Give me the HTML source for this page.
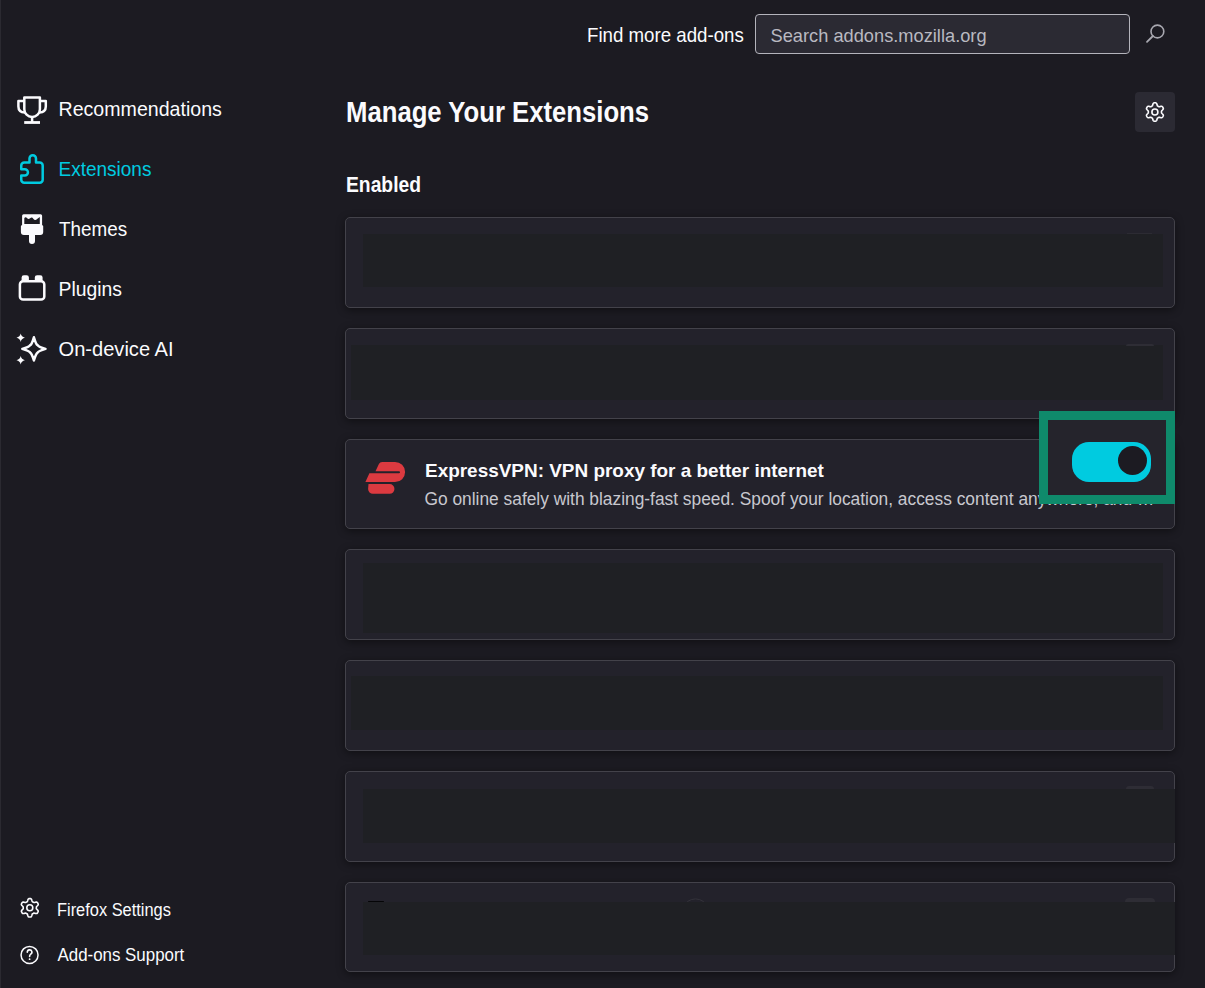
<!DOCTYPE html>
<html><head><meta charset="utf-8"><style>
html,body{margin:0;padding:0;}
body{width:1205px;height:988px;overflow:hidden;background:#1c1b22;position:relative;font-family:"Liberation Sans",sans-serif;}
.t{position:absolute;white-space:pre;line-height:1;}
.card{position:absolute;left:345px;width:830px;box-sizing:border-box;border:1px solid #43424a;border-radius:5px;background:#23222b;box-shadow:0 2px 8px rgba(0,0,0,0.45);}
</style></head><body>
<div style="position:absolute;left:0;top:0;width:1px;height:988px;background:#2b2a31"></div>
<svg width="60" height="988" style="position:absolute;left:0;top:0" viewBox="0 0 60 988">
 <g fill="none" stroke="#fbfbfe" stroke-width="2.5" stroke-linejoin="round" stroke-linecap="butt">
  <!-- trophy -->
  <path d="M24.3,97.5 H39.9 V109.2 A7.8,7.8 0 0 1 24.3,109.2 Z"/>
  <path d="M24.3,101.1 H18.4 V106.5 C18.4,110.2 20.8,112.3 24.9,112.6"/>
  <path d="M39.9,101.1 H45.8 V106.5 C45.8,110.2 43.4,112.3 39.3,112.6"/>
  <path d="M32.1,117 V122.5"/>
  <path d="M24.2,122.5 H40" stroke-width="2.8"/>
 </g>
 <path fill="none" stroke="#00cbe0" stroke-width="2.5" stroke-linejoin="round"
  d="M29.5,162.6 V158.4 A3.25,3.25 0 0 1 36,158.4 V162.6 H39.7 A3,3 0 0 1 42.7,165.6 V179.8 A3,3 0 0 1 39.7,182.8 H24.25 A3,3 0 0 1 21.25,179.8 V175.5 H24.8 A3.15,3.15 0 0 0 24.8,169.2 H21.25 V165.6 A3,3 0 0 1 24.25,162.6 Z"/>
 <!-- brush -->
 <path fill="#fbfbfe" fill-rule="evenodd" d="M23.6,214.2 H40.6 A1.5,1.5 0 0 1 42.1,215.7 V226 H22.1 V215.7 A1.5,1.5 0 0 1 23.6,214.2 Z
   M24.3,223.9 V218.2 Q25.2,216.5 26.4,217.6 Q28.2,219.9 30.1,218.3 Q31.9,216.7 33.3,218.7 Q35.1,221.2 37.1,219 L39.8,216.9 V223.9 Z"/>
 <path fill="#fbfbfe" d="M21.9,225.3 H42.2 A1,1 0 0 1 43.2,226.3 V232 A3,3 0 0 1 40.2,235 H35 V241 A3,3 0 0 1 29,241 V235 H23.9 A3,3 0 0 1 20.9,232 V226.3 A1,1 0 0 1 21.9,225.3 Z"/>
 <!-- plugin -->
 <rect x="19.9" y="281.3" width="24.4" height="18.3" rx="3.2" fill="none" stroke="#fbfbfe" stroke-width="2.5"/>
 <path fill="#fbfbfe" d="M21.6,281 V277.6 A2.3,2.3 0 0 1 23.9,275.3 H26.6 A2.3,2.3 0 0 1 28.9,277.6 V281 Z M34.8,281 V277.6 A2.3,2.3 0 0 1 37.1,275.3 H40.3 A2.3,2.3 0 0 1 42.6,277.6 V281 Z"/>
 <!-- sparkle -->
 <path fill="none" stroke="#fbfbfe" stroke-width="2.5" stroke-linejoin="round"
   d="M33.90,337.30 Q35.94,344.27 37.60,345.20 Q38.52,346.86 45.50,348.90 Q38.52,350.94 37.60,352.60 Q35.94,353.52 33.90,360.50 Q31.86,353.52 30.20,352.60 Q29.27,350.94 22.30,348.90 Q29.27,346.86 30.20,345.20 Q31.86,344.27 33.90,337.30 Z"/>
 <path fill="#fbfbfe" d="M20.7,333.6 Q21.4,337 24.9,337.7 Q21.4,338.4 20.7,341.9 Q20,338.4 16.5,337.7 Q20,337 20.7,333.6 Z"/>
 <path fill="#fbfbfe" d="M20.7,356.1 Q21.4,359.5 24.9,360.2 Q21.4,360.9 20.7,364.4 Q20,360.9 16.5,360.2 Q20,359.5 20.7,356.1 Z"/>
 <!-- footer gear -->
 <path fill="none" stroke="#fbfbfe" stroke-width="1.6" stroke-linejoin="round" d="M36.40,907.80 L36.39,908.15 L36.36,908.49 L36.49,908.86 L36.89,909.31 L37.43,909.84 L37.93,910.44 L38.23,911.03 L38.20,911.54 L38.00,911.98 L37.77,912.40 L37.52,912.81 L37.24,913.21 L36.81,913.48 L36.15,913.52 L35.39,913.39 L34.65,913.19 L34.06,913.06 L33.68,913.14 L33.39,913.34 L33.10,913.52 L32.80,913.68 L32.48,913.83 L32.23,914.12 L32.04,914.70 L31.84,915.43 L31.58,916.16 L31.21,916.71 L30.76,916.95 L30.28,916.99 L29.80,917.00 L29.32,916.99 L28.84,916.95 L28.39,916.71 L28.02,916.16 L27.76,915.43 L27.56,914.70 L27.37,914.12 L27.12,913.83 L26.80,913.68 L26.50,913.52 L26.21,913.34 L25.92,913.14 L25.54,913.06 L24.95,913.19 L24.21,913.39 L23.45,913.52 L22.79,913.48 L22.36,913.21 L22.08,912.81 L21.83,912.40 L21.60,911.98 L21.40,911.54 L21.37,911.03 L21.67,910.44 L22.17,909.84 L22.71,909.31 L23.11,908.86 L23.24,908.49 L23.21,908.15 L23.20,907.80 L23.21,907.45 L23.24,907.11 L23.11,906.74 L22.71,906.29 L22.17,905.76 L21.67,905.16 L21.37,904.57 L21.40,904.06 L21.60,903.62 L21.83,903.20 L22.08,902.79 L22.36,902.39 L22.79,902.12 L23.45,902.08 L24.21,902.21 L24.95,902.41 L25.54,902.54 L25.92,902.46 L26.21,902.26 L26.50,902.08 L26.80,901.92 L27.12,901.77 L27.37,901.48 L27.56,900.90 L27.76,900.17 L28.02,899.44 L28.39,898.89 L28.84,898.65 L29.32,898.61 L29.80,898.60 L30.28,898.61 L30.76,898.65 L31.21,898.89 L31.58,899.44 L31.84,900.17 L32.04,900.90 L32.23,901.48 L32.48,901.77 L32.80,901.92 L33.10,902.08 L33.39,902.26 L33.68,902.46 L34.06,902.54 L34.65,902.41 L35.39,902.21 L36.15,902.08 L36.81,902.12 L37.24,902.39 L37.52,902.79 L37.77,903.20 L38.00,903.62 L38.20,904.06 L38.23,904.57 L37.93,905.16 L37.43,905.76 L36.89,906.29 L36.49,906.74 L36.36,907.11 L36.39,907.45 Z"/>
 <circle cx="29.8" cy="907.8" r="3" fill="none" stroke="#fbfbfe" stroke-width="1.6"/>
 <!-- help -->
 <circle cx="29.55" cy="954.9" r="8.5" fill="none" stroke="#fbfbfe" stroke-width="1.5"/>
 <path fill="none" stroke="#fbfbfe" stroke-width="1.6" stroke-linecap="round" d="M27.3,952.2 A2.3,2.3 0 1 1 30.5,954.3 C29.8,954.8 29.6,955.3 29.6,956.4"/>
 <circle cx="29.6" cy="959.2" r="0.9" fill="#fbfbfe"/>
</svg>
<div class="t" style="left:58.5px;top:100.41px;font-size:19.6px;font-weight:400;color:#fbfbfe;transform:scaleY(1.03);transform-origin:0 16.59px;">Recommendations</div>
<div class="t" style="left:58.5px;top:159.92px;font-size:19.0px;font-weight:400;color:#00cbe0;transform:scaleY(1.04);transform-origin:0 16.08px;">Extensions</div>
<div class="t" style="left:59px;top:221.04px;font-size:18.85px;font-weight:400;color:#fbfbfe;transform:scaleY(1.06);transform-origin:0 15.96px;">Themes</div>
<div class="t" style="left:58.5px;top:279.62px;font-size:19.35px;font-weight:400;color:#fbfbfe;transform:scaleY(1.04);transform-origin:0 16.38px;">Plugins</div>
<div class="t" style="left:58.5px;top:338.99px;font-size:20.1px;font-weight:400;color:#fbfbfe;transform:scaleY(1.02);transform-origin:0 17.01px;">On-device AI</div>
<div class="t" style="left:57px;top:901.72px;font-size:16.4px;font-weight:400;color:#fbfbfe;transform:scaleY(1.08);transform-origin:0 13.88px;">Firefox Settings</div>
<div class="t" style="left:57.5px;top:948.49px;font-size:16.9px;font-weight:400;color:#fbfbfe;transform:scaleY(1.06);transform-origin:0 14.31px;">Add-ons Support</div>
<div class="t" style="left:587px;top:27.17px;font-size:18.7px;font-weight:400;color:#fbfbfe;transform:scaleY(1.04);transform-origin:0 15.83px;">Find more add-ons</div>
<div style="position:absolute;left:755px;top:14px;width:375px;height:40px;box-sizing:border-box;border:1px solid #b4b4bc;border-radius:4px;background:#2b2a33"></div><div class="t" style="left:770.5px;top:27.35px;font-size:18.25px;font-weight:400;color:#b9b9c1;transform:scaleY(1.04);transform-origin:0 15.45px;">Search addons.mozilla.org</div>
<svg width="40" height="40" style="position:absolute;left:1137px;top:12px" viewBox="1137 12 40 40">
 <circle cx="1157.4" cy="31.5" r="6.4" fill="none" stroke="#a8a8b0" stroke-width="1.6"/>
 <path d="M1152.9,36 L1147,41.9" stroke="#a8a8b0" stroke-width="1.8" stroke-linecap="round"/>
</svg><div class="t" style="left:346px;top:101.24px;font-size:25.7px;font-weight:700;color:#fbfbfe;transform:scaleY(1.12);transform-origin:0 21.76px;">Manage Your Extensions</div>
<div style="position:absolute;left:1135px;top:92px;width:40px;height:40px;border-radius:4px;background:#2b2a33"></div><svg width="40" height="40" style="position:absolute;left:1135px;top:92px" viewBox="1135 92 40 40">
 <path fill="none" stroke="#fbfbfe" stroke-width="1.6" stroke-linejoin="round" d="M1161.50,112.00 L1161.49,112.35 L1161.46,112.69 L1161.59,113.06 L1161.99,113.51 L1162.53,114.04 L1163.03,114.64 L1163.33,115.23 L1163.30,115.74 L1163.10,116.18 L1162.87,116.60 L1162.62,117.01 L1162.34,117.41 L1161.91,117.68 L1161.25,117.72 L1160.49,117.59 L1159.75,117.39 L1159.16,117.26 L1158.78,117.34 L1158.49,117.54 L1158.20,117.72 L1157.90,117.88 L1157.58,118.03 L1157.33,118.32 L1157.14,118.90 L1156.94,119.63 L1156.68,120.36 L1156.31,120.91 L1155.86,121.15 L1155.38,121.19 L1154.90,121.20 L1154.42,121.19 L1153.94,121.15 L1153.49,120.91 L1153.12,120.36 L1152.86,119.63 L1152.66,118.90 L1152.47,118.32 L1152.22,118.03 L1151.90,117.88 L1151.60,117.72 L1151.31,117.54 L1151.02,117.34 L1150.64,117.26 L1150.05,117.39 L1149.31,117.59 L1148.55,117.72 L1147.89,117.68 L1147.46,117.41 L1147.18,117.01 L1146.93,116.60 L1146.70,116.18 L1146.50,115.74 L1146.47,115.23 L1146.77,114.64 L1147.27,114.04 L1147.81,113.51 L1148.21,113.06 L1148.34,112.69 L1148.31,112.35 L1148.30,112.00 L1148.31,111.65 L1148.34,111.31 L1148.21,110.94 L1147.81,110.49 L1147.27,109.96 L1146.77,109.36 L1146.47,108.77 L1146.50,108.26 L1146.70,107.82 L1146.93,107.40 L1147.18,106.99 L1147.46,106.59 L1147.89,106.32 L1148.55,106.28 L1149.31,106.41 L1150.05,106.61 L1150.64,106.74 L1151.02,106.66 L1151.31,106.46 L1151.60,106.28 L1151.90,106.12 L1152.22,105.97 L1152.47,105.68 L1152.66,105.10 L1152.86,104.37 L1153.12,103.64 L1153.49,103.09 L1153.94,102.85 L1154.42,102.81 L1154.90,102.80 L1155.38,102.81 L1155.86,102.85 L1156.31,103.09 L1156.68,103.64 L1156.94,104.37 L1157.14,105.10 L1157.33,105.68 L1157.58,105.97 L1157.90,106.12 L1158.20,106.28 L1158.49,106.46 L1158.78,106.66 L1159.16,106.74 L1159.75,106.61 L1160.49,106.41 L1161.25,106.28 L1161.91,106.32 L1162.34,106.59 L1162.62,106.99 L1162.87,107.40 L1163.10,107.82 L1163.30,108.26 L1163.33,108.77 L1163.03,109.36 L1162.53,109.96 L1161.99,110.49 L1161.59,110.94 L1161.46,111.31 L1161.49,111.65 Z"/>
 <circle cx="1154.9" cy="112" r="3" fill="none" stroke="#fbfbfe" stroke-width="1.6"/>
</svg><div class="t" style="left:346px;top:175.66px;font-size:19.3px;font-weight:700;color:#fbfbfe;transform:scaleY(1.12);transform-origin:0 16.34px;">Enabled</div>
<div class="card" style="top:217px;height:91px"></div><div style="position:absolute;left:363px;top:234px;width:800px;height:53px;background:#1f2024"></div><div class="card" style="top:328px;height:91px"></div><div style="position:absolute;left:351px;top:345px;width:812px;height:55px;background:#1f2024"></div><div class="card" style="top:439px;height:90px"></div><div class="card" style="top:549px;height:91px"></div><div style="position:absolute;left:363px;top:563px;width:800px;height:70px;background:#1f2024"></div><div class="card" style="top:660px;height:91px"></div><div style="position:absolute;left:351px;top:676px;width:812px;height:54px;background:#1f2024"></div><div class="card" style="top:771px;height:91px"></div><div style="position:absolute;left:363px;top:789px;width:812px;height:54px;background:#1f2024"></div><div class="card" style="top:882px;height:90px"></div><div style="position:absolute;left:363px;top:902px;width:812px;height:53px;background:#1f2024"></div><div style="position:absolute;left:1126px;top:343.5px;width:28px;height:2.5px;background:#2e2d35;border-radius:8px 8px 0 0"></div><div style="position:absolute;left:1126px;top:786px;width:28px;height:3px;background:#2e2d35;border-radius:8px 8px 0 0"></div><div style="position:absolute;left:1125px;top:897.5px;width:30px;height:4.5px;background:#2e2d35;border-radius:8px 8px 0 0"></div><div style="position:absolute;left:1127px;top:233px;width:25px;height:1px;background:#2c2b33"></div><div style="position:absolute;left:368px;top:900.5px;width:16px;height:1.5px;border-radius:1px;background:#050507"></div><svg width="30" height="8" style="position:absolute;left:680px;top:896px" viewBox="680 896 30 8"><path d="M687.3,901.6 Q695.5,896.2 703.7,901.6" fill="none" stroke="#33323a" stroke-width="1"/></svg><svg width="60" height="60" style="position:absolute;left:350px;top:440px" viewBox="350 440 60 60">
 <path fill="#dc3a40" d="M378.9,464 Q379.9,461.9 382.2,461.9 H395 A10.1,10.1 0 0 1 395,482.1 H365.4 L369.4,473.2 H399 A1,1 0 0 0 399,471.2 H375.5 Z"/>
 <path fill="#dc3a40" d="M368.5,484.1 H389.6 A4.85,4.85 0 0 1 389.6,493.8 H372.9 A4.85,4.85 0 0 1 368.1,489 Z"/>
</svg><div class="t" style="left:425px;top:462.26px;font-size:18.95px;font-weight:700;color:#fbfbfe;">ExpressVPN: VPN proxy for a better internet</div>
<div class="t" style="left:424.5px;top:490.71px;font-size:17.35px;font-weight:400;color:#c8c8cf;transform:scaleY(1.03);transform-origin:0 14.69px;">Go online safely with blazing-fast speed. Spoof your location, access content anywhere, and …</div>
<div style="position:absolute;left:1039px;top:411px;width:136px;height:93px;box-sizing:border-box;border:9px solid #0f8a6b;background:#25242c"></div><div style="position:absolute;left:1072px;top:442px;width:79px;height:40px;border-radius:17px;background:#00cbe0"></div><div style="position:absolute;left:1118px;top:445.5px;width:29px;height:29px;border-radius:50%;background:#1c1b22"></div>
</body></html>
